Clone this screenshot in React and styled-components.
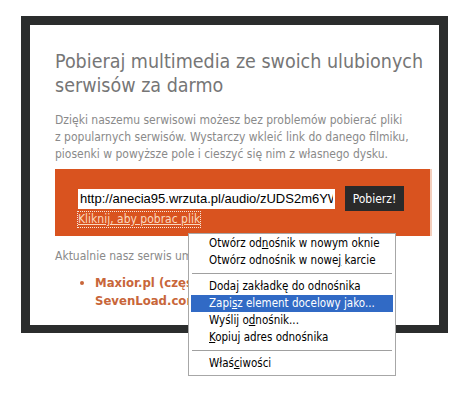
import React from 'react'
import styled, { createGlobalStyle } from 'styled-components'

const Global = createGlobalStyle`
body {
  margin: 0;
  background: #ffffff;
  font-family: "DejaVu Sans Condensed", "DejaVu Sans", sans-serif;
}
`

const Page = styled('div')`
position: relative;
width: 473px;
height: 416px;
padding: 16px 0 0 21px;
box-sizing: border-box;
`
const Frame = styled('div')`
width: 427px;
box-sizing: border-box;
background-color: #2b2d2d;
padding: 9px 9px 8px 9px;
`
const Sheet = styled('div')`
background-color: #ffffff;
height: 300px;
overflow: hidden;
padding: 25px 9px 0 25px;
box-sizing: border-box;
`
const Title = styled('h1')`
margin: 0;
font-weight: normal;
font-size: 19.5px;
line-height: 24px;
color: #767676;
white-space: nowrap;
`
const Intro = styled('p')`
margin: 14px 0 0 0;
font-size: 12px;
line-height: 17px;
color: #8a8a8a;
white-space: nowrap;
`
const Box = styled('div')`
margin-top: 6px;
background-color: #d9531f;
box-shadow: 2px 0 0 #f3cdbb;
padding: 17px 0 9px 23px;
display: flex;
flex-flow: column;
`
const Form = styled('form')`
display: flex;
align-items: center;
gap: 10px;
`
const Input = styled('input')`
width: 257px;
height: 20px;
box-sizing: border-box;
border: none;
padding: 0 2px;
background: #ffffff;
font-family: "Liberation Sans", Arial, sans-serif;
font-size: 13px;
color: #000000;
outline: none;
`
const Button = styled('button')`
width: 59px;
height: 25px;
border: none;
background-color: #2a2a2a;
color: #ffffff;
font-family: inherit;
font-size: 12px;
padding: 0;
`
const Link = styled('a')`
align-self: flex-start;
margin-top: 1px;
font-size: 12px;
line-height: 15px;
color: #f9d8be;
text-decoration: underline;
outline: 1px dotted #f5e6dc;
`
const Note = styled('p')`
margin: 12px 0 0 0;
font-size: 12px;
line-height: 17px;
color: #8a8a8a;
white-space: nowrap;
`
const List = styled('ul')`
margin: 9px 0 0 0;
padding-left: 40px;
color: #c8663a;
font-weight: bold;
font-size: 13px;
line-height: 18px;
`

const Menu = styled('div')`
position: absolute;
left: 188px;
top: 233px;
width: 208px;
box-sizing: border-box;
background: #ffffff;
border: 1px solid #a7a7a7;
padding: 1px 2px 3px 2px;
font-size: 11.5px;
color: #000000;
`
const Item = styled('div')`
height: 17px;
line-height: 17px;
padding-left: 18px;
white-space: nowrap;
background: ${(p) => (p.active ? '#316ac5' : 'transparent')};
color: ${(p) => (p.active ? '#ffffff' : '#000000')};
u { text-decoration: underline; }
`
const Separator = styled('div')`
height: 1px;
margin: 4px 1px 4px 1px;
background: #a0a0a0;
`

function App() {
  return (
    <Page>
      <Global />
      <Frame>
        <Sheet>
          <Title>Pobieraj multimedia ze swoich ulubionych<br />serwisów za darmo</Title>
          <Intro>
            Dzięki naszemu serwisowi możesz bez problemów pobierać pliki<br />
            z popularnych serwisów. Wystarczy wkleić link do danego filmiku,<br />
            piosenki w powyższe pole i cieszyć się nim z własnego dysku.
          </Intro>
          <Box>
            <Form onSubmit={(e) => e.preventDefault()}>
              <Input type="text" defaultValue="http://anecia95.wrzuta.pl/audio/zUDS2m6YWq/" />
              <Button type="submit">Pobierz!</Button>
            </Form>
            <Link href="#">Kliknij, aby pobrac plik</Link>
          </Box>
          <Note>Aktualnie nasz serwis umożliwia pobieranie plików z serwisów:</Note>
          <List>
            <li>Maxior.pl (częściowo), Wrzuta.pl<br />SevenLoad.com</li>
          </List>
        </Sheet>
      </Frame>
      <Menu>
        <Item>Otwórz od<u>n</u>ośnik w nowym oknie</Item>
        <Item>Otwórz odnośnik w nowe<u>j</u> karcie</Item>
        <Separator />
        <Item>Doda<u>j</u> zakładkę do odnośnika</Item>
        <Item active>Zapi<u>s</u>z element docelowy jako...</Item>
        <Item>Wyślij o<u>d</u>nośnik...</Item>
        <Item><u>K</u>opiuj adres odnośnika</Item>
        <Separator />
        <Item>Właś<u>c</u>iwości</Item>
      </Menu>
    </Page>
  )
}

export default App
